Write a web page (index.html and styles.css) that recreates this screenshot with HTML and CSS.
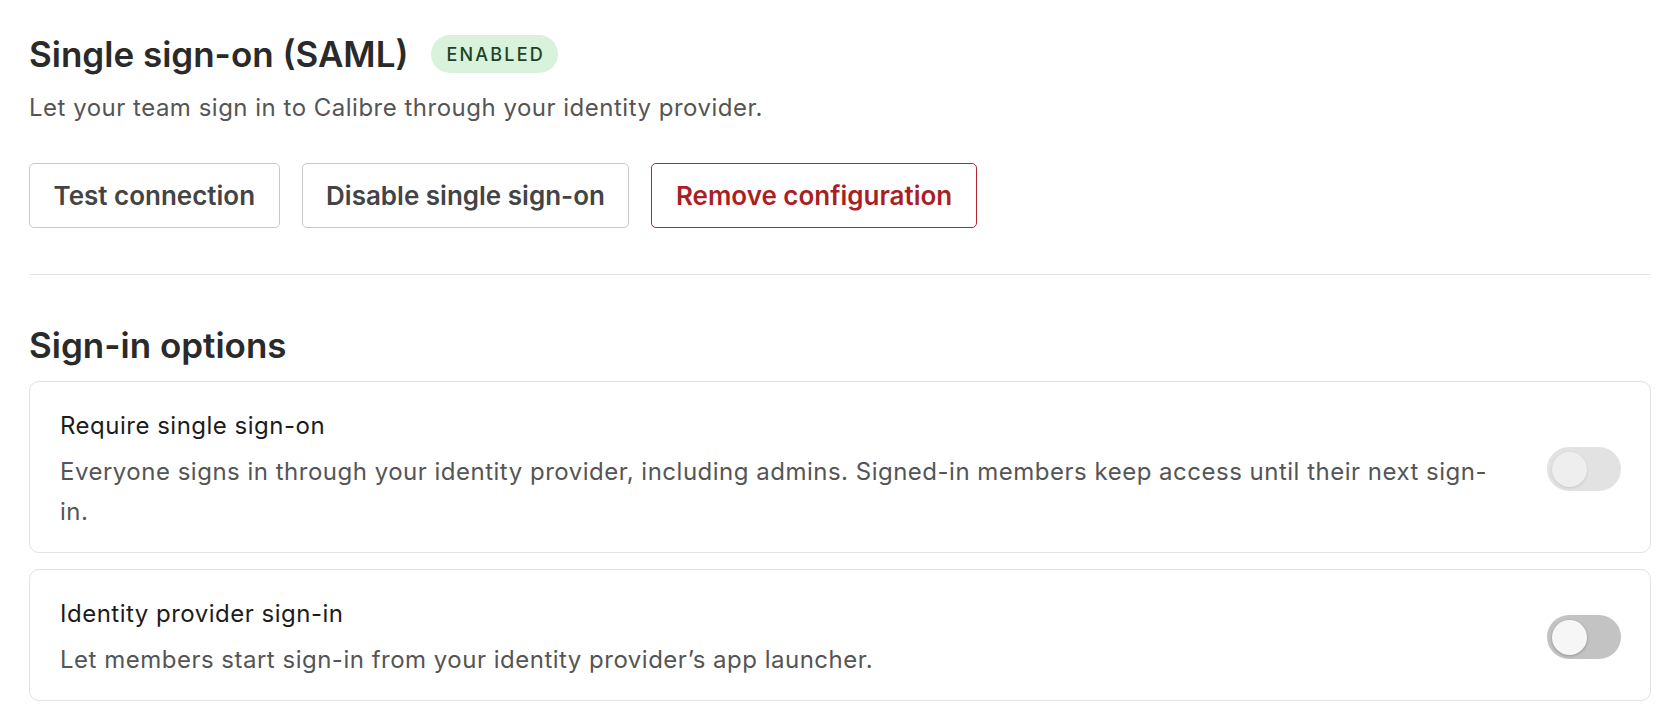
FILE: index.html
```html
<!DOCTYPE html>
<html lang="en">
<head>
    <meta charset="UTF-8">
    <meta name="viewport" content="width=device-width, initial-scale=1.0">
    <title>Single sign-on settings</title>
    <link rel="stylesheet" href="styles.css">
</head>
<body>
    <!-- SAML section -->
    <section class="sso-section">
        <div class="sso-header">
            <h1>Single sign-on (SAML)</h1>
            <span class="status-badge">ENABLED</span>
        </div>
        <p class="sso-intro">Let your team sign in to Calibre through your identity provider.</p>
        <div class="sso-actions">
            <button type="button" class="action-button">Test connection</button>
            <button type="button" class="action-button">Disable single sign-on</button>
            <button type="button" class="action-button danger">Remove configuration</button>
        </div>
    </section>

    <hr class="divider">

    <!-- Sign-in options -->
    <section class="options-section">
        <h2>Sign-in options</h2>

        <div class="option-card">
            <div class="option-text">
                <div class="option-title">Require single sign-on</div>
                <div class="option-desc">Everyone signs in through your identity provider, including admins. Signed-in members keep access until their next sign-in.</div>
            </div>
            <label class="toggle disabled">
                <input type="checkbox" disabled>
                <span class="toggle-track"><span class="toggle-knob"></span></span>
            </label>
        </div>

        <div class="option-card">
            <div class="option-text">
                <div class="option-title">Identity provider sign-in</div>
                <div class="option-desc">Let members start sign-in from your identity provider’s app launcher.</div>
            </div>
            <label class="toggle">
                <input type="checkbox">
                <span class="toggle-track"><span class="toggle-knob"></span></span>
            </label>
        </div>
    </section>
</body>
</html>
```

FILE: styles.css
```css
/* Page */
body {
    margin: 0;
    padding: 0 29px;
    background: #ffffff;
    font-family: 'Inter', 'Noto Sans', sans-serif;
    color: #2a2a2a;
}

/* SAML header */
.sso-header {
    display: flex;
    align-items: center;
    gap: 23px;
    padding-top: 34px;
}

h1, h2 {
    margin: 0;
    font-size: 35px;
    line-height: 40px;
    font-weight: 600;
    color: #2a2a2a;
}

.status-badge {
    display: inline-flex;
    align-items: center;
    height: 38px;
    padding: 0 13px 0 15px;
    border-radius: 19px;
    background-color: #d8f2db;
    color: #1c4326;
    font-size: 18px;
    font-weight: 500;
    letter-spacing: 2.2px;
}

.sso-intro {
    margin: 19px 0 0;
    font-size: 24px;
    line-height: 30px;
    letter-spacing: 0.5px;
    color: #555555;
}

/* Action buttons */
.sso-actions {
    display: flex;
    gap: 22px;
    margin-top: 40px;
}

.action-button {
    height: 65px;
    padding: 0 23.5px;
    background: #ffffff;
    border: 1px solid #c9c9c9;
    border-radius: 5px;
    font-family: inherit;
    font-size: 26px;
    font-weight: 600;
    color: #444444;
    cursor: pointer;
}

.action-button.danger {
    border-color: #b3272a;
    color: #a91f23;
}

.divider {
    margin: 46px 0 0;
    border: none;
    border-top: 1px solid #e3e3e3;
}

/* Options list */
.options-section h2 {
    margin-top: 50px;
}

.option-card {
    display: flex;
    align-items: center;
    gap: 50px;
    margin-top: 16px;
    padding: 24px 29px 20px 30px;
    border: 1px solid #e2e2e2;
    border-radius: 10px;
}

.option-card + .option-card {
    margin-top: 16px;
}

.option-text {
    flex: 1;
    display: flex;
    flex-direction: column;
    gap: 6px;
}

.option-title {
    font-size: 24px;
    line-height: 40px;
    letter-spacing: 0.5px;
    color: #1c1c1c;
}

.option-desc {
    font-size: 24px;
    line-height: 40px;
    letter-spacing: 0.5px;
    color: #555555;
}

/* Switch */
.toggle {
    position: relative;
    flex-shrink: 0;
    cursor: pointer;
}

.toggle input {
    position: absolute;
    opacity: 0;
    width: 0;
    height: 0;
}

.toggle-track {
    display: flex;
    align-items: center;
    width: 74px;
    height: 44px;
    padding: 0 5px;
    box-sizing: border-box;
    border-radius: 22px;
    background-color: #c3c3c3;
}

.toggle-knob {
    width: 35px;
    height: 35px;
    border-radius: 50%;
    background-color: #f6f6f6;
    box-shadow: 0 1px 3px rgba(0, 0, 0, 0.25);
}

.toggle.disabled {
    cursor: default;
}

.toggle.disabled .toggle-track {
    background-color: #e2e2e2;
}

.toggle.disabled .toggle-knob {
    background-color: #eeeeee;
    box-shadow: 0 1px 3px rgba(0, 0, 0, 0.12);
}
```
